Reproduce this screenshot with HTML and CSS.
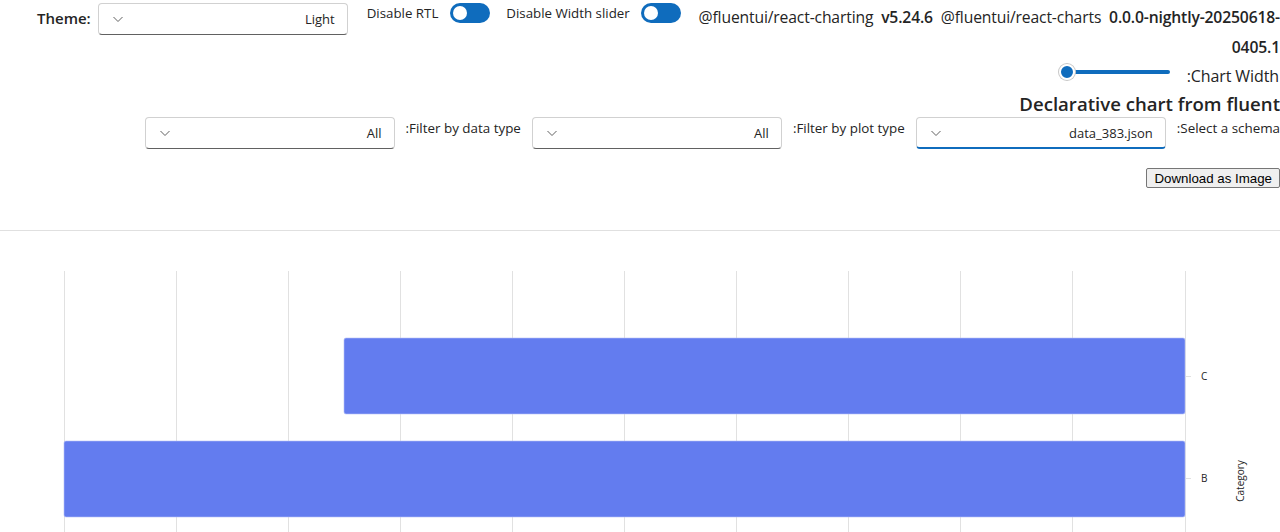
FILE: index.html
```html
<!DOCTYPE html>
<html lang="en">
<head>
<meta charset="utf-8">
<title>Declarative chart</title>
<link rel="stylesheet" href="styles.css">
</head>
<body>
<div class="top">
  <span class="theme-label">Theme:</span>
  <div class="dropdown theme-dd">
    <svg class="chev" width="12" height="12" viewBox="0 0 12 12"><path d="M1.5 4 L6 8.5 L10.5 4" fill="none" stroke="#616161" stroke-width="1"/></svg>
    <span class="dd-value">Light</span>
  </div>
  <span class="toggle-label rtl-label">Disable RTL</span>
  <span class="toggle"><span class="knob"></span></span>
  <span class="toggle-label width-label">Disable Width slider</span>
  <span class="toggle"><span class="knob"></span></span>
  <div class="versions">@fluentui/react-charting&nbsp; <b>v5.24.6</b>&nbsp; @fluentui/react-charts&nbsp; <b>0.0.0-nightly-20250618-<br>0405.1</b></div>
</div>
<div class="width-row">
  <div class="slider"><span class="thumb"></span><span class="track"></span></div>
  <span class="width-label-text">:Chart Width</span>
</div>
<h2 class="title">Declarative chart from fluent</h2>
<div class="filters">
  <div class="dropdown">
    <svg class="chev" width="12" height="12" viewBox="0 0 12 12"><path d="M1.5 4 L6 8.5 L10.5 4" fill="none" stroke="#616161" stroke-width="1"/></svg>
    <span class="dd-value">All</span>
  </div>
  <span class="filter-label">:Filter by data type</span>
  <div class="dropdown">
    <svg class="chev" width="12" height="12" viewBox="0 0 12 12"><path d="M1.5 4 L6 8.5 L10.5 4" fill="none" stroke="#616161" stroke-width="1"/></svg>
    <span class="dd-value">All</span>
  </div>
  <span class="filter-label">:Filter by plot type</span>
  <div class="dropdown focused">
    <svg class="chev" width="12" height="12" viewBox="0 0 12 12"><path d="M1.5 4 L6 8.5 L10.5 4" fill="none" stroke="#616161" stroke-width="1"/></svg>
    <span class="dd-value">data_383.json</span>
  </div>
  <span class="filter-label">:Select a schema</span>
</div>
<div class="download-row"><button class="download">Download as Image</button></div>
<div class="divider"></div>
<svg class="chart" width="1280" height="301" viewBox="0 0 1280 301">
  <g stroke="#e1e1e1" stroke-width="1">
    <line x1="64.5" y1="40" x2="64.5" y2="301"/>
    <line x1="176.5" y1="40" x2="176.5" y2="301"/>
    <line x1="288.5" y1="40" x2="288.5" y2="301"/>
    <line x1="400.5" y1="40" x2="400.5" y2="301"/>
    <line x1="512.5" y1="40" x2="512.5" y2="301"/>
    <line x1="624.5" y1="40" x2="624.5" y2="301"/>
    <line x1="736.5" y1="40" x2="736.5" y2="301"/>
    <line x1="848.5" y1="40" x2="848.5" y2="301"/>
    <line x1="960.5" y1="40" x2="960.5" y2="301"/>
    <line x1="1072.5" y1="40" x2="1072.5" y2="301"/>
    <line x1="1185.5" y1="40" x2="1185.5" y2="301"/>
    <line x1="1186" y1="145.5" x2="1191" y2="145.5"/>
    <line x1="1186" y1="247.5" x2="1191" y2="247.5"/>
  </g>
  <rect x="344" y="107" width="841" height="76" rx="2" fill="#637cef" stroke="#b6c1f7" stroke-width="0.6"/>
  <rect x="64" y="210" width="1121" height="76" rx="2" fill="#637cef" stroke="#b6c1f7" stroke-width="0.6"/>
  <text x="1201" y="149" class="tick">C</text>
  <text x="1201" y="251" class="tick">B</text>
  <text class="axis-title" transform="translate(1244 250) rotate(-90)" text-anchor="middle">Category</text>
</svg>
</body>
</html>
```

FILE: styles.css
```css
html, body {
  margin: 0;
  padding: 0;
  background: #ffffff;
  color: #242424;
  font-family: "Open Sans", "Noto Sans", sans-serif;
  overflow: hidden;
}

.top {
  display: flex;
  align-items: flex-start;
  padding: 3px 0 0 37px;
  height: 57px;
  box-sizing: border-box;
}

.theme-label {
  font-weight: 600;
  font-size: 15px;
  line-height: 20px;
  margin-top: 5px;
  margin-right: 7px;
  white-space: nowrap;
  flex-shrink: 0;
}

.dropdown {
  width: 250px;
  height: 32px;
  box-sizing: border-box;
  border: 1px solid #d1d1d1;
  border-bottom-color: #616161;
  border-radius: 4px;
  display: flex;
  align-items: center;
  padding: 0 12px 0 13px;
  flex-shrink: 0;
  background: #fff;
}

.dropdown.focused {
  border-bottom: 2px solid #0f6cbd;
}

.chev {
  flex-shrink: 0;
}

.dd-value {
  margin-left: auto;
  font-size: 13px;
  color: #242424;
}

.toggle-label {
  font-size: 13.3px;
  line-height: 20px;
  margin-top: 0;
  white-space: nowrap;
  flex-shrink: 0;
}

.rtl-label { margin-left: 19px; margin-right: 12px; }
.width-label { margin-left: 16px; margin-right: 11px; }

.toggle {
  width: 40px;
  height: 20px;
  border-radius: 10px;
  background: #0f6cbd;
  display: flex;
  align-items: center;
  padding-left: 3px;
  box-sizing: border-box;
  flex-shrink: 0;
}

.knob {
  width: 14px;
  height: 14px;
  border-radius: 50%;
  background: #fff;
}

.versions {
  flex: 1;
  min-width: 0;
  margin-left: 16px;
  font-size: 15.7px;
  line-height: 30px;
  margin-top: -1px;
  text-align: right;
  letter-spacing: -0.15px;
  white-space: nowrap;
}

.versions b {
  font-weight: 600;
}

.width-row {
  display: flex;
  justify-content: flex-end;
  align-items: center;
  height: 30px;
  margin-top: 4px;
}

.slider {
  display: flex;
  align-items: center;
  margin-right: 17px;
  margin-top: -8px;
}

.thumb {
  width: 16px;
  height: 16px;
  border-radius: 50%;
  background: #0f6cbd;
  border: 2px solid #ffffff;
  box-shadow: 0 0 0 1px #c8c8c8;
  box-sizing: border-box;
  position: relative;
  z-index: 1;
}

.track {
  width: 96px;
  height: 4px;
  background: #0f6cbd;
  border-radius: 2px;
  margin-left: -1px;
}

.width-label-text {
  font-size: 16px;
  font-weight: 500;
  margin-right: 1px;
  letter-spacing: -0.1px;
}

.title {
  margin: 0;
  text-align: right;
  font-size: 18.6px;
  font-weight: 600;
  line-height: 26px;
  margin-top: 0;
}

.filters {
  display: flex;
  justify-content: flex-end;
  align-items: flex-start;
  margin-top: 0;
}

.filter-label {
  font-size: 13.4px;
  line-height: 20px;
  margin: 1px 11px 0 11px;
}

.filter-label:last-child {
  margin-right: 0;
}

.download-row {
  display: flex;
  justify-content: flex-end;
  margin-top: 19px;
}

.download {
  font-family: "Liberation Sans", Arial, sans-serif;
  font-size: 13.3px;
  padding: 1px 7px;
  height: 20px;
  background: #efefef;
  border: 1px solid #767676;
  border-radius: 2px;
  color: #000;
}

.divider {
  height: 1px;
  background: #e0e0e0;
  margin-top: 42px;
}

.chart {
  display: block;
}

.tick {
  font-family: "Open Sans", sans-serif;
  font-size: 10px;
  fill: #242424;
}

.axis-title {
  font-family: "Open Sans", sans-serif;
  font-size: 10px;
  fill: #242424;
}
```
